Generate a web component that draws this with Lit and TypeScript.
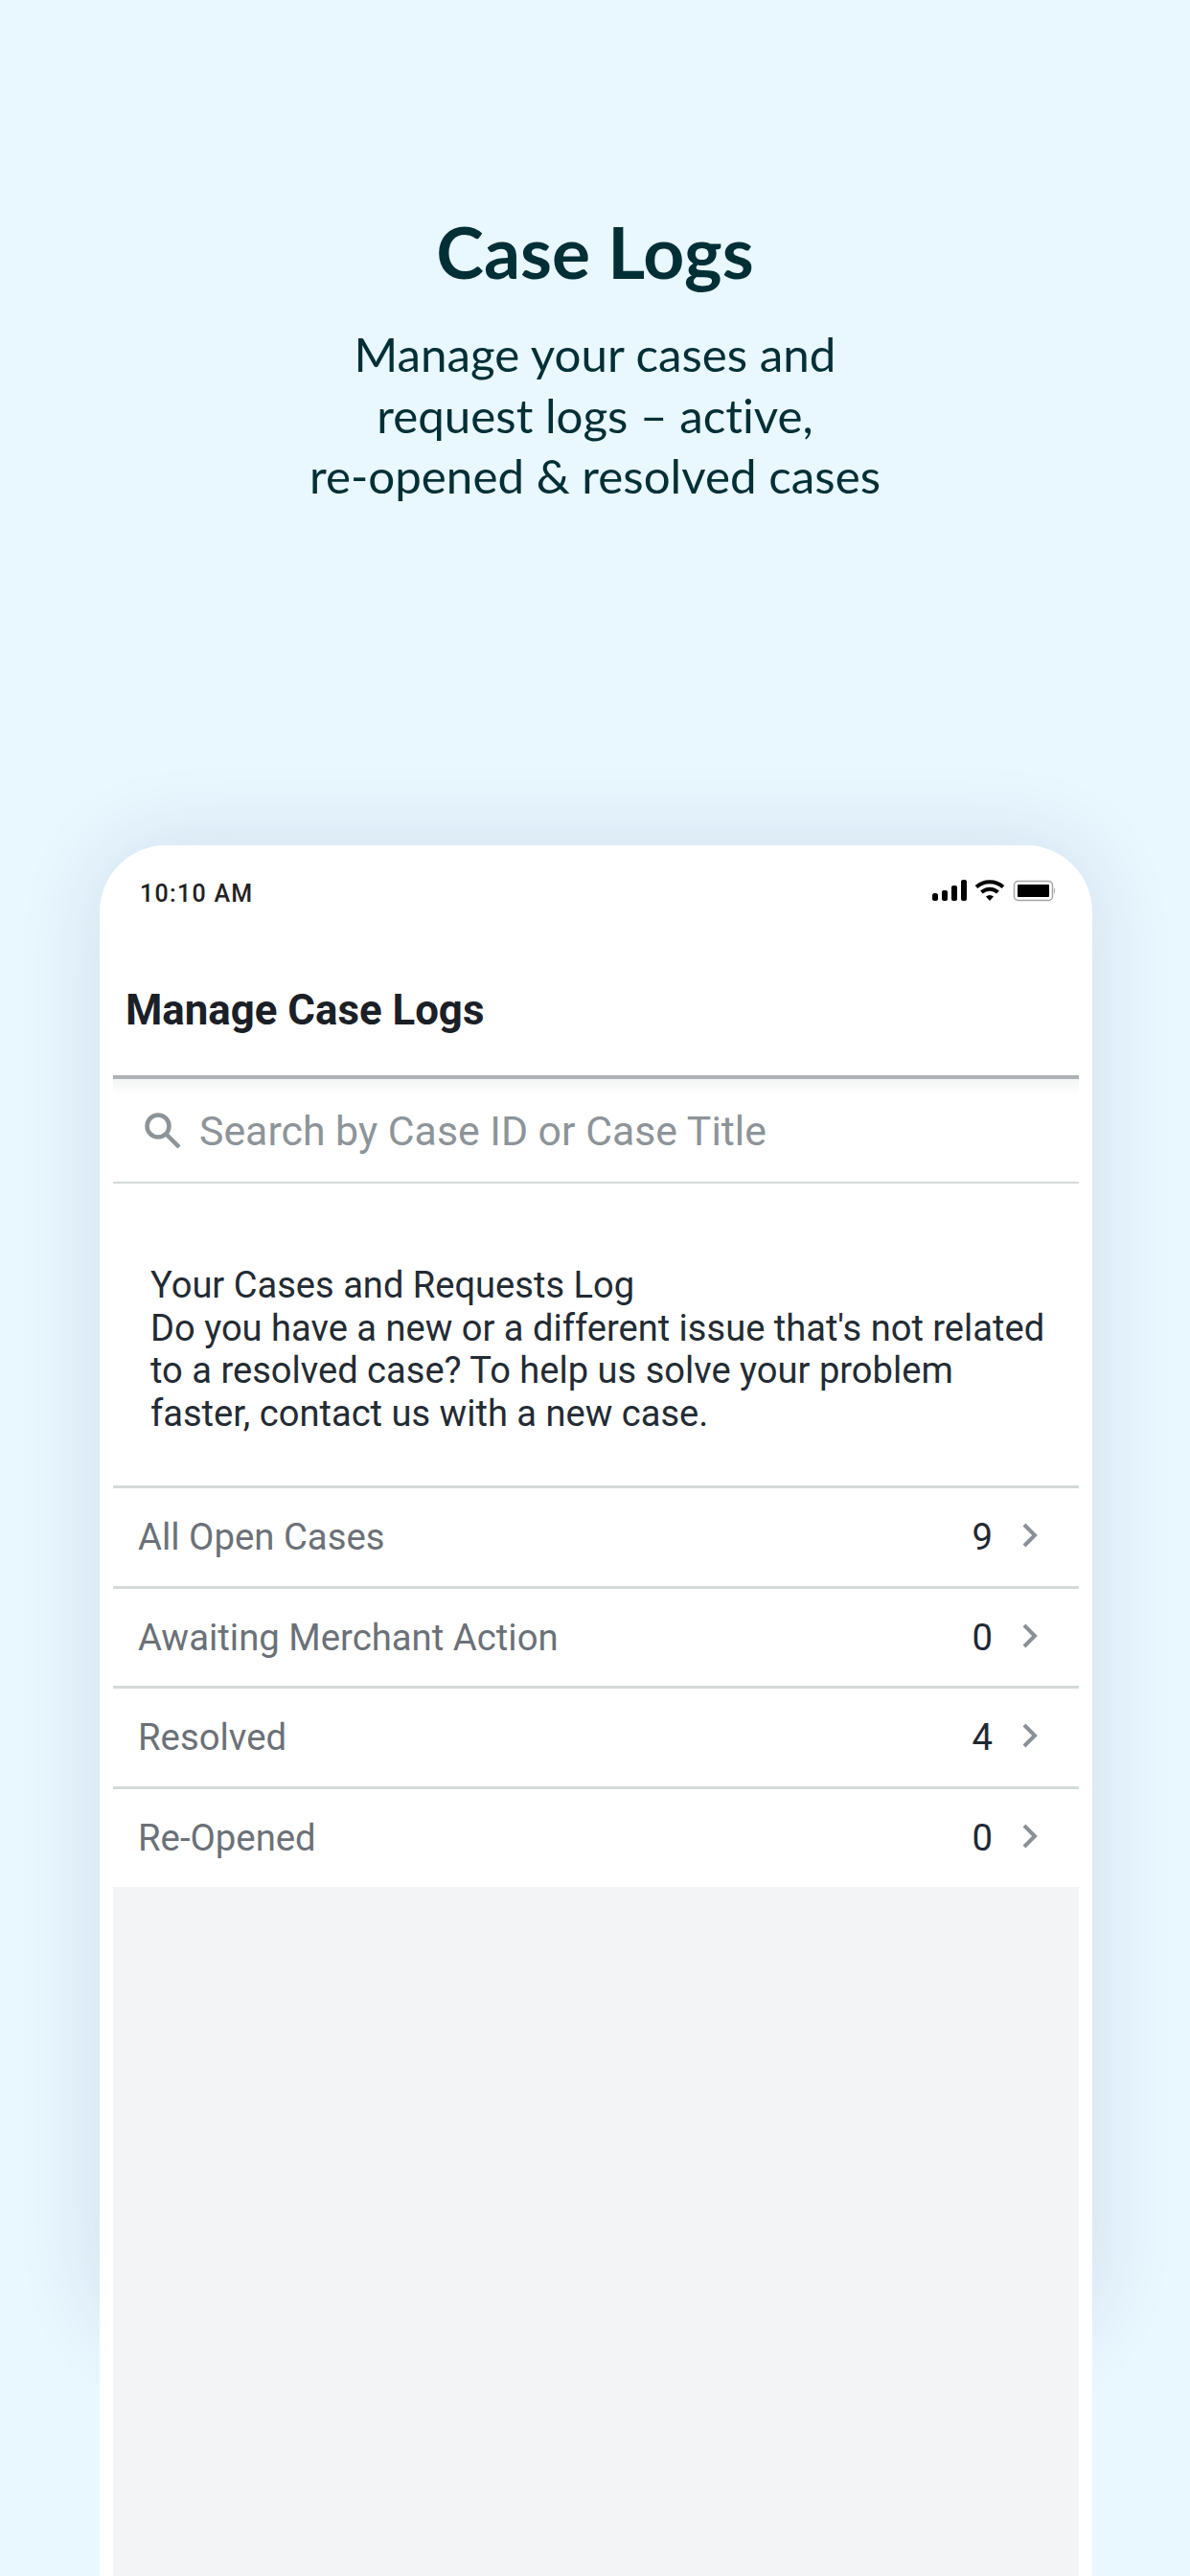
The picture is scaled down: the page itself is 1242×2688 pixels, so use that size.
import { LitElement, css, html } from "lit";
import { customElement } from "lit/decorators.js";

const ROWS = [
  { label: "All Open Cases", count: 9 },
  { label: "Awaiting Merchant Action", count: 0 },
  { label: "Resolved", count: 4 },
  { label: "Re-Opened", count: 0 },
];

@customElement("app-root")
export class AppRoot extends LitElement {
  static override styles = css`
    :host {
      display: block;
      isolation: isolate;
      width: 1242px;
      height: 2688px;
      overflow: hidden;
      background-color: #e9f7ff;
      font-family: Roboto, sans-serif;
    }

    .hero {
      display: flex;
      flex-direction: column;
      align-items: center;
      height: 882px;
      box-sizing: border-box;
      padding-top: 219px;
      color: #002f36;
      font-family: Lato, sans-serif;
      font-variant-ligatures: none;
      text-align: center;
    }

    h1 {
      margin: 0;
      font-size: 75px;
      line-height: 86px;
      font-weight: 700;
    }

    .sub {
      margin: 33px 0 0;
      font-size: 49.3px;
      line-height: 63.5px;
    }

    .phone {
      position: relative;
      display: flex;
      flex-direction: column;
      width: 1036px;
      height: 1806px;
      margin-left: 104px;
      box-sizing: border-box;
      padding: 0 14px;
      border-radius: 70px 70px 0 0;
      background-color: #fff;
    }

    /* the shadow stops short of the page bottom */
    .phone::before {
      content: "";
      position: absolute;
      z-index: -1;
      inset: 0 0 250px 0;
      border-radius: 70px;
      box-shadow: 0 0 90px rgba(0, 45, 75, 0.12);
    }

    .status {
      display: flex;
      align-items: center;
      justify-content: space-between;
      height: 98px;
      padding: 0 25px 0 28px;
      font-size: 25px;
      font-weight: 500;
      letter-spacing: 1.3px;
      color: #222;
    }

    .status span {
      margin-top: 2px;
    }

    .status svg {
      margin-top: -4px;
    }

    .title {
      display: flex;
      align-items: center;
      box-sizing: border-box;
      height: 146px;
      padding: 6px 0 0 13px;
      border-bottom: 4px solid #aeb1b5;
      font-size: 43.8px;
      font-weight: 700;
      color: #1b2027;
    }

    .search {
      display: flex;
      align-items: center;
      gap: 18px;
      height: 107px;
      padding-left: 32px;
      border-bottom: 2px solid #d5d9d9;
      background: linear-gradient(#f3f4f5, #fff 16px);
      font-size: 42.8px;
      color: #8d9499;
    }

    .intro {
      box-sizing: border-box;
      height: 318px;
      margin: 0;
      padding: 84px 20px 0 39px;
      border-bottom: 3px solid #d5d9d9;
      font-size: 38.1px;
      line-height: 44.7px;
      color: #232b33;
    }

    .row {
      display: flex;
      align-items: center;
      box-sizing: border-box;
      height: 104.5px;
      padding: 0 43px 0 26px;
      border-bottom: 3px solid #d5d9d9;
      font-size: 38.3px;
      color: #6b7177;
    }

    .row.last {
      height: 102.5px;
      border-bottom: 0;
    }

    .row .label {
      flex: 1;
    }

    .row .count {
      margin-right: 1px;
      color: #1f2933;
    }

    .row svg {
      margin: -3px 0 0 30px;
    }

    .rest {
      flex: 1;
      background-color: #f2f4f6;
    }
  `;

  override render() {
    return html`
      <div class="hero">
        <h1>Case Logs</h1>
        <p class="sub">
          Manage your cases and<br />request logs – active,<br />re-opened &amp;
          resolved cases
        </p>
      </div>
      <div class="phone">
        <div class="status">
          <span>10:10 AM</span>
          <svg width="128" height="24" viewBox="0 0 128 24">
            <g fill="#000">
              <rect x="0" y="15" width="6" height="8" rx="2.5" />
              <rect x="10" y="12" width="6" height="11" rx="2" />
              <rect x="20" y="7" width="6" height="16" rx="2" />
              <rect x="30" y="1" width="6" height="22" rx="2" />
            </g>
            <g fill="none" stroke="#000" stroke-width="4">
              <path d="M46 8.500c8-7 20-7 28 0" />
              <path d="M51.500 14c5-4.500 12-4.500 17 0" />
            </g>
            <path d="M56 18.500c2.500-2 5.500-2 8 0l-4 4.500z" fill="#000" />
            <rect x="85.500" y="2.500" width="40" height="20" rx="4" fill="none" stroke="#a5a5a5" stroke-width="1.500" />
            <rect x="89" y="6" width="33" height="13" rx="1" fill="#000" />
            <path d="M127 9.500c1.500.5 1.500 5.500 0 6z" fill="#a5a5a5" />
          </svg>
        </div>
        <div class="title">Manage Case Logs</div>
        <div class="search">
          <svg width="40" height="40" viewBox="0 0 40 40" fill="none" stroke="#8d9499" stroke-width="4.500">
            <circle cx="15" cy="15" r="11.500" />
            <path d="M23.500 23.500 37 37" />
          </svg>
          <span>Search by Case ID or Case Title</span>
        </div>
        <p class="intro">
          Your Cases and Requests Log<br />Do you have a new or a different
          issue that's not related<br />to a resolved case? To help us solve
          your problem<br />faster, contact us with a new case.
        </p>
        ${ROWS.map(
          (row, i) => html`
            <div class="row ${i === ROWS.length - 1 ? "last" : ""}">
              <span class="label">${row.label}</span>
              <span class="count">${row.count}</span>
              <svg width="16" height="26" viewBox="0 0 16 26" fill="none" stroke="#8a9096" stroke-width="4">
                <path d="M2 2l11 11L2 24" />
              </svg>
            </div>
          `
        )}
        <div class="rest"></div>
      </div>
    `;
  }
}

declare global {
  interface HTMLElementTagNameMap {
    "app-root": AppRoot;
  }
}
